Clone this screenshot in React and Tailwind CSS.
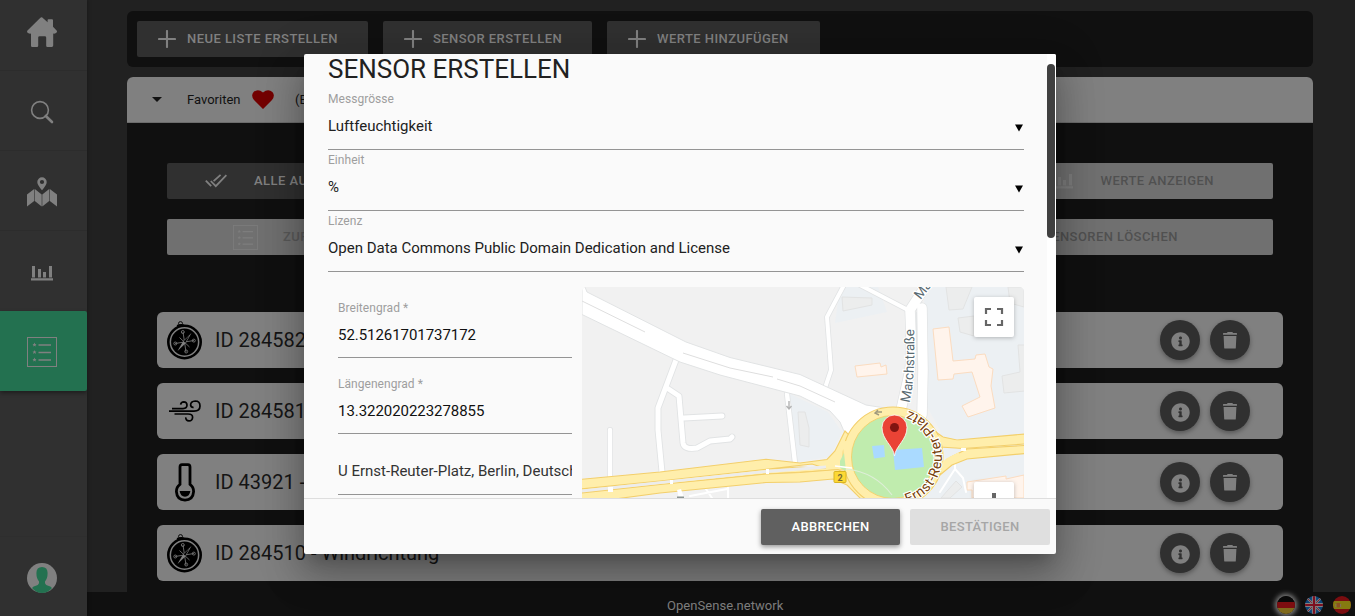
import React from "react";
import { FaInfoCircle } from "react-icons/fa";

const HomeIcon = () => (
  <svg width="30" height="30" viewBox="0 0 30 30" fill="#808080">
    <path d="M15 0.3 L20.6 5.2 V3 Q20.6 2.2 21.4 2.2 H25 Q26 2.2 26 3.2 V9.8 L29.6 13.5 Q30.4 14.6 29.6 15.6 Q28.7 16.9 26.2 16.6 V28.6 Q26.2 30 24.8 30 H20.4 Q19.2 30 19.2 28.8 V20.6 Q19.2 19.2 17.8 19.2 H12.6 Q11.2 19.2 11.2 20.6 V28.8 Q11.2 30 10 30 H5.2 Q4 30 4 28.8 V16.6 Q1.3 16.9 0.4 15.6 Q-0.3 14.6 0.5 13.6 L13.4 0.7 Q14.3 -0.1 15 0.3Z" />
  </svg>
);

const SearchIcon = () => (
  <svg width="24" height="24" viewBox="0 0 24 24" fill="none" stroke="#808080">
    <circle cx="10" cy="10" r="8.4" strokeWidth="1.6" />
    <path d="M15.8 16 L22 22" strokeWidth="2.6" strokeLinecap="round" />
  </svg>
);

const MapIcon = () => (
  <svg width="30" height="30" viewBox="0 0 30 30" fill="#808080">
    <path fillRule="evenodd" d="M15 0.3 a4.7 4.7 0 0 1 4.7 4.7 q0 3 -4.7 8.2 q-4.7 -5.2 -4.7 -8.2 a4.7 4.7 0 0 1 4.7 -4.7Z M15 2.9 a2.1 2.1 0 1 0 0 4.2 a2.1 2.1 0 1 0 0 -4.2Z" />
    <path d="M0 17.5 L7.2 12 V24 L0 29.5Z M7.8 12 L14.7 17.5 V29.5 L7.8 24Z M15.3 17.5 L22.2 12 V24 L15.3 29.5Z M22.8 12 L30 17.5 V29.5 L22.8 24Z" />
  </svg>
);

const ChartIcon = ({ color = "#808080" }) => (
  <svg width="22" height="16" viewBox="0 0 22 16" fill={color}>
    <path d="M1 1 H4 V12.5 H1Z M7 4 H10 V12.5 H7Z M12 7 H15 V12.5 H12Z M18 1 H21 V12.5 H18Z M0 13.2 H22 V15.4 H0Z" />
  </svg>
);

const ListIcon = ({ size = 30, color = "#808080" }) => (
  <svg width={size} height={size} viewBox="0 0 30 30" fill="none" stroke={color}>
    <rect x="0.5" y="0.5" width="29" height="29" />
    <path d="M11.5 8 H24 M11.5 15.5 H24 M11.5 23 H24" strokeWidth="1.4" />
    {[7.6, 15, 22.6].map((y) => (
      <path
        key={y}
        transform={`translate(7.5 ${y})`}
        fill={color}
        stroke="none"
        d="M0 -2 L.6 -.6 L2 -.5 L1 .5 L1.3 1.9 L0 1.1 L-1.3 1.9 L-1 .5 L-2 -.5 L-.6 -.6Z"
      />
    ))}
  </svg>
);

const AvatarIcon = () => (
  <svg width="30" height="30" viewBox="0 0 30 30">
    <circle cx="15" cy="15" r="15" fill="#808080" />
    <path
      fill="#237150"
      d="M15 4 Q20.6 4 20.6 10 Q20.6 15.5 18 18.5 Q17.6 21.5 20.5 22.6 Q24 23.6 25 25 Q21 30 15 30 Q9 30 5 25 Q6 23.6 9.5 22.6 Q12.4 21.5 12 18.5 Q9.4 15.5 9.4 10 Q9.4 4 15 4Z"
    />
  </svg>
);

const PlusIcon = () => (
  <svg width="18" height="18" viewBox="0 0 18 18" stroke="#808080" strokeWidth="2.1" strokeLinecap="round">
    <path d="M9 1 V17 M1 9 H17" />
  </svg>
);

const CheckIcon = () => (
  <svg width="22" height="14" viewBox="0 0 22 14" fill="none" stroke="#808080" strokeWidth="1.8">
    <path d="M0.8 6.6 L6.2 12.2 M5.8 7 L10.8 12.2 L21.4 1.2 M8.6 7.2 L15.6 0.8" />
  </svg>
);

const CompassIcon = () => (
  <svg width="36" height="40" viewBox="0 0 36 40" fill="none" stroke="#000">
    <ellipse cx="13.5" cy="3.4" rx="2" ry="1.8" strokeWidth="0.9" />
    <path d="M10 5.8 Q13.5 4.2 17 5.2" strokeWidth="1.6" />
    <circle cx="17.5" cy="22" r="16.2" strokeWidth="2.6" />
    <circle cx="17.5" cy="22" r="13.4" fill="#000" stroke="none" />
    <g stroke="#808080" strokeWidth="0.8">
      <path d="M16 12 L19 32 M8 23.5 L27 20.5 M12.5 17.5 L22.5 27" />
      <circle cx="15.8" cy="12" r="1.5" />
      <circle cx="19.2" cy="31.5" r="1.5" />
      <circle cx="8.3" cy="23.5" r="1.5" />
      <circle cx="26.8" cy="20.6" r="1.5" />
    </g>
    <path d="M24.5 13 L18.9 23.1 L10.5 31 L16.2 20.9Z" fill="#808080" stroke="none" />
    <path d="M22.5 15.5 L16.6 21.2 L18.3 22.8Z" fill="#000" stroke="none" />
  </svg>
);

const WindIcon = () => (
  <svg width="34" height="24" viewBox="0 0 34 24" fill="none" stroke="#000" strokeWidth="1.7">
    <path d="M1 12.2 H26 Q32 12 32 7 Q32 2 27.2 2 Q22.8 2.2 22.6 6 Q23 8.6 25.6 8.3" />
    <path d="M4 9.6 H15 Q19 9.4 19 6 Q18.8 3 15.8 2.9 Q13 3 12.6 5.6" />
    <path d="M6.5 15 H20 Q24.6 15 24.6 18.2 Q24.4 21.8 21 21.9 Q17.6 21.7 17.8 18.4" />
  </svg>
);

const ThermoIcon = () => (
  <svg width="20" height="39" viewBox="0 0 20 39">
    <path
      d="M5 4 Q5 1.6 7 1.6 H13 Q15 1.6 15 4 V21.4 Q18.6 24 18.6 28.6 Q18 36.9 10 37.1 Q2 36.9 1.4 28.6 Q1.4 24 5 21.4Z"
      fill="none"
      stroke="#000"
      strokeWidth="2.8"
    />
    <path d="M4.6 28 H15.4 Q14.6 33.6 10 33.7 Q5.4 33.6 4.6 28Z" fill="#000" />
  </svg>
);

const TrashIcon = () => (
  <svg width="14" height="17" viewBox="0 0 14 17" fill="#808080">
    <path d="M0 1.6 Q0 1 .6 1 H4 Q4.2 0 5 0 H9 Q9.8 0 10 1 H13.4 Q14 1 14 1.6 V2.8 H0Z M.6 4 H13.4 L12.8 16 Q12.8 16.6 12 16.6 H2 Q1.3 16.6 1.2 16Z" />
  </svg>
);

const FlagDe = () => (
  <svg width="18" height="18" viewBox="0 0 18 18" className="rounded-full shadow-[0_0_5px_2px_#808080]">
    <path fill="#090909" d="M0 0H18V6H0Z" />
    <path fill="#7d0d10" d="M0 6H18V12H0Z" />
    <path fill="#806a1c" d="M0 12H18V18H0Z" />
  </svg>
);

const FlagUk = () => (
  <svg width="18" height="18" viewBox="0 0 18 18" className="rounded-full">
    <path fill="#0c4377" d="M0 0H18V18H0Z" />
    <path stroke="#808080" strokeWidth="2.2" d="M0 0L18 18M18 0L0 18" />
    <path stroke="#7d1020" strokeWidth="0.8" d="M0 0L18 18M18 0L0 18" />
    <path stroke="#808080" strokeWidth="4.2" d="M9 0V18M0 9H18" />
    <path stroke="#7d1020" strokeWidth="2.2" d="M9 0V18M0 9H18" />
  </svg>
);

const FlagEs = () => (
  <svg width="18" height="18" viewBox="0 0 18 18" className="rounded-full">
    <path fill="#7b0d10" d="M0 0H18V18H0Z" />
    <path fill="#857a10" d="M0 5H18V13H0Z" />
    <path fill="#8a5020" d="M3.5 7H7V11Q5.2 12 3.5 11Z" />
    <path fill="#807070" d="M2.5 8H3.3V11H2.5Z M7.3 8H8.1V11H7.3Z" />
  </svg>
);

const SideItem = ({ className = "", children }) => (
  <div className={`flex h-20 shrink-0 items-center justify-center pr-[3px] ${className}`}>{children}</div>
);

const TopButton = ({ className, children }) => (
  <button
    className={`flex h-9 items-center gap-[11px] rounded-xs bg-[#303030] pl-[21px] text-[13px] font-medium tracking-[0.45px] text-[#808080] ${className}`}
  >
    <PlusIcon />
    {children}
  </button>
);

const RoundButton = ({ children }) => (
  <button className="flex h-10 w-10 items-center justify-center rounded-full bg-[#303030] shadow-[0_2px_5px_rgba(0,0,0,0.35)]">
    {children}
  </button>
);

const sensors = [
  { icon: <CompassIcon />, name: "ID 284582 - Windrichtung" },
  { icon: <WindIcon />, name: "ID 284581 - Windstärke" },
  { icon: <ThermoIcon />, name: "ID 43921 - Temperatur" },
  { icon: <CompassIcon />, name: "ID 284510 - Windrichtung" },
];

const SelectField = ({ label, value }) => (
  <div className="flex h-[61px] flex-col border-b border-[#949494]">
    <span className="mt-[3px] h-[14px] text-[12px] leading-[14px] tracking-[0.04px] text-[#9e9e9e]">{label}</span>
    <div className="mt-[10px] flex h-5 items-center justify-between">
      <span className="text-[15px] leading-5 text-[#212121]">{value}</span>
      <svg width="8" height="8" viewBox="0 0 8 8" className="mt-[3px] mr-[1px]">
        <path d="M0 0.5H8L4 7.5Z" fill="#000" />
      </svg>
    </div>
  </div>
);

const InputField = ({ label, value }) => (
  <div className="flex h-[76px] flex-col border-b border-[#949494]">
    <span className="mt-[19px] h-[14px] text-[12px] leading-[14px] tracking-[0.04px] text-[#9e9e9e]">{label}</span>
    <span className="mt-[10px] text-[15px] leading-5 tracking-[-0.05px] text-[#111]">{value}</span>
  </div>
);

const StreetMap = () => (
  <svg width="442" height="211" viewBox="582 287 442 211" className="block rounded-t-[5px]" fontFamily="Roboto, sans-serif">
    <rect x="582" y="287" width="442" height="211" fill="#f1f1f1" />
    <g fill="#ecf0f3">
      <path d="M924 287H1024V498H936L948 470L940 430L926 405Z" />
      <path d="M840 287H878L887 312L835 323Z" />
      <path d="M786 392L828 412L842 432L830 457L796 462Z" />
      <path d="M910 498L948 465L1024 455V498Z" />
    </g>
    <g fill="#eceded" stroke="#e2e3e3" strokeWidth="1">
      <path d="M842 297L872 298V305L843 311Z" />
      <path d="M946 287H972L963 309L949 310Z" />
      <path d="M958 318L974 316V336L960 332Z" />
      <path d="M798 412L805 412L809 428L809 447L800 445Z" />
      <path d="M1018 345H1025V391L1004 393L1002 376L1020 372Z" />
      <path d="M1008 287H1024V307L1010 303Z" />
      <path d="M956 481L962 487L950 498H941Z" />
    </g>
    <g fill="#fff4ec" stroke="#fbdcc0" strokeWidth="1">
      <path d="M855 366L880 363L881 367L886 365L887 374L857 377Z" />
      <path d="M933 329L949 327L953 361L975 359L976 355L985 354L989 367L993 369L991 386L995 408L968 417L962 406L980 397L972 372L954 374L953 379L938 380Z" />
      <path d="M967 482L1006 476V479L1024 475V498H972V490H967Z" />
    </g>
    <g fill="none" stroke="#e1e3e4" strokeLinejoin="round" strokeLinecap="round">
      <path strokeWidth="6.8" d="M676 360L658 408L658 430L662 472M667 388L679 396L683 443Q684 450 697 448L710 441L730 439L732 437M684 418L722 416" />
      <path strokeWidth="6" d="M610 430V490M787 394L795 463" />
      <path strokeWidth="5.6" d="M844 285L827 317L831 370L825 388M860 285L908 310" />
      <path strokeWidth="11" d="M925 287L910 310Q912 350 910 370L901 410M922 308L923 370L922 415" />
    </g>
    <g fill="none" stroke="#fff" strokeLinejoin="round" strokeLinecap="round">
      <path strokeWidth="5" d="M676 360L658 408L658 430L662 472M667 388L679 396L683 443Q684 450 697 448L710 441L730 439L732 437M684 418L722 416" />
      <path strokeWidth="4.4" d="M610 430V490M787 394L795 463" />
      <path strokeWidth="4" d="M844 285L827 317L831 370L825 388M860 285L908 310" />
      <path strokeWidth="9.6" d="M925 287L910 310Q912 350 910 370L901 410M922 308L923 370L922 415" />
      <path strokeWidth="2" d="M955 465V469L963 478L966 492M955 469L940 492" />
      <path strokeWidth="2" d="M678 488L683 498M690 496L727 489M706 489L712 498M728 487V498" />
    </g>
    <path
      d="M582 287H585L587 292L686 342L730 357.5L800 374.5L840 393L866 405L885 408L846 436L840 422L830 411L800 396L720 375L680 362L582 314.5Z"
      fill="#fff"
      stroke="#e1e3e4"
      strokeWidth="1"
    />
    <path d="M582 301L645 332M683 353L730 368L773 377M777 379L800 386L835 402" fill="none" stroke="#dedede" strokeWidth="1" />
    <path d="M916.5 312V350" stroke="#e1e3e4" strokeWidth="0.8" />

    <g fill="#ffeeab" stroke="#f3cf6b" strokeWidth="1.1">
      <path d="M581 479.3L660 472L766 459.3L800 463L827 459.5L835 451L845 431L852 438L856 470L835 470L800 472.3L766 474L660 485L581 492.5V489L660 481L766 469.3L800 467L826 468.5L812 464L766 469.3L660 481L581 489Z" />
      <path d="M581 493L660 484.5L766 474L800 472.5L838 469.5L856 480L872 499H861L847 485L833 479L800 482L766 482.5L660 493L615 499H581Z" />
      <path d="M930 428L943 437L957 440L1025 434V444L963 448.5L940 447Z" />
      <path d="M1025 445.5L967 449L951 457L940 467L940 475L952 465L967 459L1025 453.5Z" />
    </g>
    <path d="M582 491L660 482.7L766 471.5L826 467" fill="none" stroke="#ececec" strokeWidth="2.8" />
    <circle cx="893" cy="457" r="50" fill="#ffeeab" stroke="#f3cf6b" strokeWidth="1.1" />
    <path d="M932 436L945 442L960 444M938 471L948 461L960 455" fill="none" stroke="#ffeeab" strokeWidth="6" />
    <path d="M846 441L850 470L856 482" fill="none" stroke="#ffeeab" strokeWidth="8" />
    <circle cx="893" cy="457" r="41.5" fill="#c0ecae" stroke="#f3cf6b" strokeWidth="0.9" />
    <path d="M844 453L846 471L840 468V461Z" fill="#c0ecae" />
    <path d="M846 469Q875 472 892 495" fill="none" stroke="#deeed8" strokeWidth="1.2" />
    <path d="M835 466L852 468" stroke="#fff" strokeWidth="1.4" />
    <path d="M872 446L884 445L885 457L874 458.5Z M893 450L922 448L924 467L895 470Z" fill="#aadaff" />
    <g fill="#fff">
      <path d="M608 487H613V492H608Z M670 480H673V484H670Z M766 469H769V474H766Z M961 448H966V451H961Z M677 490L681 489L684 498H679Z" />
    </g>
    <path d="M677 496.5H684V498H677Z" fill="#8a9392" />
    <g fill="none" stroke="#b4b4b4" strokeWidth="1.4">
      <path d="M789 401V408M786.5 406L789 409L791.5 406" />
      <path d="M882 412H876M878 410L875 413L879 415" stroke="#a09a7d" />
    </g>
    <rect x="834" y="471.5" width="12" height="11" rx="1" fill="#fdd835" stroke="#d9b422" strokeWidth="1" />
    <text x="840" y="480.5" fontSize="9" fontWeight="700" textAnchor="middle" fill="#776a36">2</text>

    <g fill="#5a6b72" stroke="#fff" strokeWidth="2.4" paintOrder="stroke" fontSize="13.5">
      <path id="march" d="M909.5 402.5Q915.5 378 914 327" fill="none" stroke="none" />
      <text textLength="74"><textPath href="#march">Marchstraße</textPath></text>
      <text transform="translate(920.5 300) rotate(-52)">Marchstraße</text>
    </g>
    <path id="platz" d="M907 503.5A48.5 48.5 0 0 0 909 411" fill="none" />
    <text fill="#783f0a" stroke="#fff" strokeWidth="2.4" paintOrder="stroke" fontSize="14" textLength="123">
      <textPath href="#platz">Ernst-Reuter-Platz</textPath>
    </text>

    <path
      d="M894.5 456C893.5 446 882 440 882 427.5A12.5 12.5 0 0 1 907 427.5C907 440 895.5 446 894.5 456Z"
      fill="#ea4335"
      stroke="#fff"
      strokeWidth="0.8"
    />
    <circle cx="894.5" cy="427.5" r="4.5" fill="#811411" />

    <g filter="drop-shadow(0 1px 2px rgba(0,0,0,.25))" fill="#fff">
      <rect x="974" y="297" width="40" height="40" rx="2" />
      <rect x="974" y="482" width="40" height="40" rx="2" />
    </g>
    <path d="M986 314V309H991M997 309H1002V314M1002 320V325H997M991 325H986V320" fill="none" stroke="#666" strokeWidth="2.2" />
    <path d="M992 493H996V500H992Z" fill="#666" />
  </svg>
);

export default function App() {
  return (
    <div className="relative flex h-[616px] w-[1355px] overflow-hidden bg-[#212121] font-['Roboto',sans-serif]">
      <nav className="z-10 flex h-full w-[87px] shrink-0 flex-col overflow-hidden bg-[#303030] shadow-[0_0_4px_rgba(0,0,0,0.35)]">
        <SideItem className="-mt-[9px] border-b border-[#2c2c2c] pt-[3px]"><HomeIcon /></SideItem>
        <SideItem className="border-b border-[#2c2c2c] pt-[2px]"><SearchIcon /></SideItem>
        <SideItem className="border-b border-[#2c2c2c] pt-[2px]"><MapIcon /></SideItem>
        <SideItem className="pt-[3px]"><ChartIcon /></SideItem>
        <SideItem className="rounded-r-xs bg-[#237150] pt-[2px] shadow-[0_2px_4px_rgba(0,0,0,0.4)]"><ListIcon /></SideItem>
        <SideItem className="mt-auto border-t border-[#2e2e2e] pt-[3px]"><AvatarIcon /></SideItem>
      </nav>

      <div className="flex min-w-0 flex-1 flex-col">
        <main className="flex h-[592px] flex-col overflow-hidden pt-[11px] pr-[42px] pl-10">
          <div className="flex h-14 shrink-0 gap-[15px] rounded-[6px] bg-[#101010] p-[10px]">
            <TopButton className="w-[231px]">NEUE LISTE ERSTELLEN</TopButton>
            <TopButton className="w-[209px]">SENSOR ERSTELLEN</TopButton>
            <TopButton className="w-[213px]">WERTE HINZUFÜGEN</TopButton>
          </div>

          <section className="mt-[10px] flex min-h-0 flex-1 flex-col rounded-t-[6px] bg-[#101010]">
            <header className="flex h-[46px] shrink-0 items-center rounded-t-[6px] border-b border-[#6c6c6c] bg-[#808080] pl-[25px] text-[13px] text-[#111]">
              <svg width="10" height="5" viewBox="0 0 10 5"><path d="M0 0H10L5 5Z" fill="#111" /></svg>
              <span className="ml-[25px] w-[65px]">Favoriten</span>
              <svg width="22" height="19" viewBox="0 0 22 19">
                <path fill="#730000" d="M11 19L2 10Q-1.5 5.5 1.6 2Q6 -2 11 2.6Q16 -2 20.4 2Q23.5 5.5 20 10Z" />
              </svg>
              <span className="ml-[21px]">(Eigene Liste)</span>
            </header>

            <div className="flex flex-col gap-5 px-10 pt-10 text-[13px] font-medium tracking-[0.45px]">
              <div className="flex gap-5">
                <button className="flex h-9 flex-1 items-center gap-[27px] rounded-xs bg-[#303030] pl-[38px] text-[#808080]">
                  <CheckIcon />
                  ALLE AUSWÄHLEN
                </button>
                <button className="flex h-9 w-[278px] items-center justify-end gap-7 rounded-xs bg-[#707070] pr-[59px] text-[#505050]">
                  <ChartIcon color="#7d7d7d" />
                  WERTE ANZEIGEN
                </button>
              </div>
              <div className="flex gap-5">
                <button className="flex h-9 flex-1 items-center gap-[25px] rounded-xs bg-[#707070] pl-[66px] text-[#595959]">
                  <ListIcon size={25} color="#7d7d7d" />
                  ZUR LISTE HINZUFÜGEN
                </button>
                <button className="flex h-9 flex-1 items-center justify-end rounded-xs bg-[#707070] pr-[95px] text-[#505050]">
                  SENSOREN LÖSCHEN
                </button>
              </div>
            </div>

            <ul className="mt-[57px] flex flex-col gap-[15px] px-[30px]">
              {sensors.map((s) => (
                <li key={s.name} className="flex h-14 items-center rounded-[6px] bg-[#808080] pr-[33px] pl-[10px]">
                  <span className="flex w-9 justify-center">{s.icon}</span>
                  <span className="ml-3 flex-1 text-[20px] text-[#151515]">{s.name}</span>
                  <span className="flex gap-[10px]">
                    <RoundButton><FaInfoCircle size={19} color="#808080" className="mt-[2px] shrink-0" /></RoundButton>
                    <RoundButton><TrashIcon /></RoundButton>
                  </span>
                </li>
              ))}
            </ul>
          </section>
        </main>

        <footer className="flex h-6 items-center bg-[#101010] pr-1">
          <span className="flex-1 pt-[3px] pl-[580px] text-[13px] tracking-[0.04px] text-[#808080]">OpenSense.network</span>
          <span className="flex gap-[10px] pt-px"><FlagDe /><FlagUk /><FlagEs /></span>
        </footer>
      </div>

      <div
        role="dialog"
        className="absolute top-[54px] left-[304px] z-20 flex h-[500px] w-[752px] flex-col overflow-hidden rounded-[2px] bg-[#fafafa] shadow-[0_24px_38px_3px_rgba(0,0,0,0.2),0_9px_46px_8px_rgba(0,0,0,0.14),0_11px_15px_-7px_rgba(0,0,0,0.2)]"
      >
        <div className="flex h-[444px]">
          <div className="w-[743px] overflow-hidden pr-[23px] pl-6">
            <h2 className="h-[35px] pt-[1px] text-[26px] leading-[28px] whitespace-nowrap text-[#212121]">SENSOR ERSTELLEN</h2>
            <SelectField label="Messgrösse" value="Luftfeuchtigkeit" />
            <SelectField label="Einheit" value="%" />
            <SelectField label="Lizenz" value="Open Data Commons Public Domain Dedication and License" />
            <div className="flex pt-[15px] pl-[10px]">
              <div className="mr-[10px] -mt-[5px] w-[234px] shrink-0">
                <InputField label="Breitengrad *" value="52.51261701737172" />
                <InputField label="Längenengrad *" value="13.322020223278855" />
                <div className="flex h-[61px] items-start overflow-hidden border-b border-[#949494] pt-[27px] text-[15px] leading-5 whitespace-nowrap text-[#333]">
                  U Ernst-Reuter-Platz, Berlin, Deutschland
                </div>
              </div>
              <StreetMap />
            </div>
          </div>
          <div className="flex-1 bg-white pt-[10px]">
            <div className="h-[174px] w-2 rounded-full bg-[#404040]" />
          </div>
        </div>
        <div className="flex h-14 items-center justify-end gap-[10px] border-t border-[#dedede] pr-[6px] text-[13px] font-medium tracking-[0.35px]">
          <button className="h-9 w-[139px] rounded-xs bg-[#606060] text-white shadow-[0_2px_5px_rgba(0,0,0,0.4)]">ABBRECHEN</button>
          <button className="h-9 w-[140px] rounded-xs bg-[#dfdfdf] text-[#a6a6a6]">BESTÄTIGEN</button>
        </div>
      </div>
    </div>
  );
}
